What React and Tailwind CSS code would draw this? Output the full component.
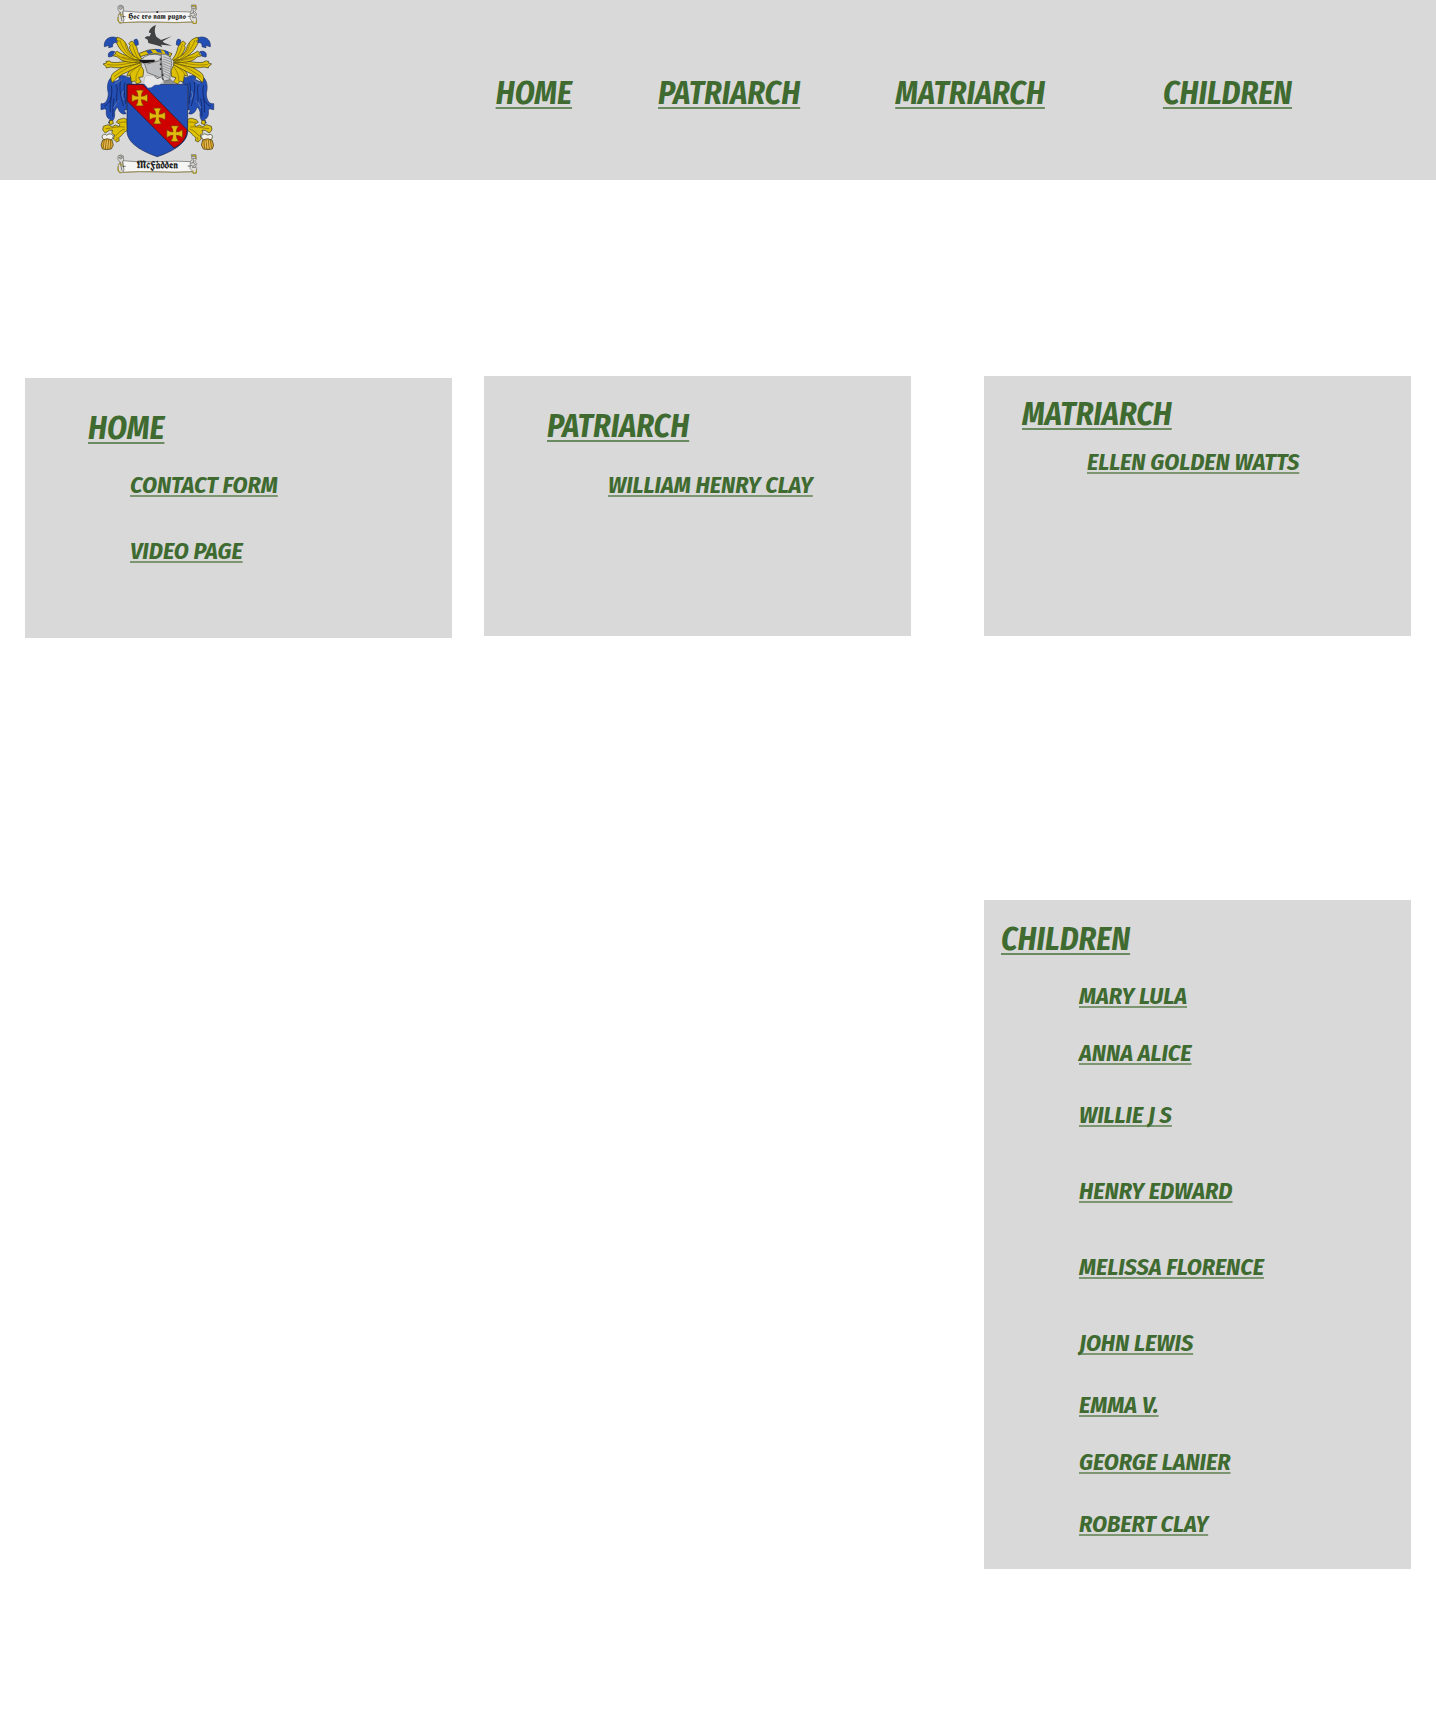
const LINK = "text-[#3f6b31] underline [text-decoration-skip-ink:none] decoration-2 whitespace-nowrap";
const LARGE = "decoration-[#6a8b5f] underline-offset-3";
const SMALL = "decoration-[#7b9671] underline-offset-2";

function Heading({ href, className = "", children }) {
  return (
    <h2 className={`leading-[38px] text-[32px] ${className}`}>
      <a href={href} className={`${LINK} ${LARGE}`}>{children}</a>
    </h2>
  );
}

function SubLink({ href, className = "", children }) {
  return (
    <li className={`leading-[30px] text-[24px] ${className}`}>
      <a href={href} className={`${LINK} ${SMALL}`}>{children}</a>
    </li>
  );
}

function Cross({ x, y }) {
  return (
    <path
      transform={`translate(${x} ${y})`}
      d="M-5-5Q-5-15-12-23Q0-25 12-23Q5-15 5-5Q15-5 23-12Q25 0 23 12Q15 5 5 5Q5 15 12 23Q0 25-12 23Q-5 15-5 5Q-15 5-23 12Q-25 0-23-12Q-15-5-5-5Z"
      fill="#e0b90c"
      stroke="#7b3205"
      strokeWidth="2"
    />
  );
}

function Mantling() {
  return (
    <g stroke="#3a3818" strokeWidth="2" strokeLinejoin="round">
      <g fill="#234eb3" stroke="#1b2f6c">
        <path d="M69 228C52 240 50 258 55 280C55 300 46 314 33 311V329L45 326L49 331C47 348 53 357 61 358L55 369C67 367 74 357 74 344C72 334 77 326 83 321C87 337 97 345 108 341L102 331L110 329V256L126 250L123 231C116 235 111 233 106 228L86 226L88 237C82 244 76 242 69 247Z" />
        <path d="M80 113C58 106 41 119 43 140L57 136L56 143L68 140C66 132 72 126 80 128Z" />
        <path d="M74 155C61 151 52 158 56 171L67 169L70 163Z" />
        <path d="M132 120L140 117L144 123L145 134L137 137L133 132Z" />
      </g>
      <path d="M77 253C88 266 75 287 82 310M63 256C71 277 57 305 61 337M93 239C86 262 92 288 100 318M105 247C99 266 106 292 107 311M42 319C53 313 61 305 64 291M68 350C70 333 67 315 72 295" fill="none" stroke="#142b70" strokeWidth="3" />
      <path d="M101 273C94 281 95 291 103 300M75 251C82 246 90 245 96 238M86 302C77 310 76 318 70 324" fill="none" stroke="#7890bd" strokeWidth="2" />
      <g fill="#dec004">
        <path d="M150 190C132 197 115 211 110 229L121 226L124 246L134 243L141 252L154 246L146 233L159 230L161 211Z" />
        <path d="M151 185C122 187 88 205 70 219C61 228 61 239 67 248C75 236 88 229 99 222C119 213 138 203 155 193Z" />
        <path d="M151 179C115 181 89 190 65 187L58 183L48 184L49 189L39 192L48 199L49 204L62 201C76 204 93 205 111 199C126 196 139 191 152 189Z" />
        <path d="M151 179C125 168 104 170 82 154L75 157L77 162L68 167L83 171C95 187 125 188 150 188Z" />
        <path d="M157 178C142 160 143 149 139 139C133 135 132 123 123 124L116 131L121 136L118 143C124 160 134 174 150 187Z" />
        <path d="M154 181C127 168 117 156 114 145C110 129 98 114 81 112L79 120L85 123L80 129C89 150 106 168 130 178Z" />
      </g>
      <path d="M145 184C118 170 100 151 89 120M149 181C132 160 132 145 126 132M145 183C112 181 92 173 79 164M144 184C113 191 80 199 51 193M147 190C111 201 91 217 72 230M151 195C129 208 120 219 118 229M152 201C143 216 135 228 139 243M105 127C107 148 115 159 132 170M95 171C112 174 128 179 142 181" fill="none" stroke="#806c04" strokeWidth="2" />
      <path d="M111 359C100 351 96 357 85 359L79 367L90 373L87 380L76 375L67 380L54 374L40 379L38 390L46 399L58 391L68 391C64 396 66 403 74 405L70 417L80 426L88 422L86 413C97 408 98 397 113 391ZM58 362L68 361L70 371L59 374Z" fill="#dec004" />
      <path d="M108 366C98 364 95 371 85 365M104 381C84 378 71 384 47 386M105 387C90 391 88 398 76 408M81 412L80 421" fill="none" stroke="#776208" />
      <path d="M40 418C30 406 44 399 50 406C58 399 68 401 70 410L64 421Z" fill="#f3f2ec" />
      <path d="M38 420Q51 412 66 420L70 435L64 447L50 449L37 447L33 435Z" fill="#d8a62a" />
      <path d="M43 419L40 444M49 418L46 448M56 418L53 448M62 420L60 446" fill="none" stroke="#754b10" />
      <path d="M46 422L43 443M53 421L50 445M59 423L57 443" fill="none" stroke="#f0ce70" />
    </g>
  );
}

function Banner({ children, y, size }) {
  return (
    <g transform={`translate(0 ${y})`} stroke="#66655f" strokeWidth="2">
      <path d="M99 17Q145 23 202 20Q259 17 307 20V50Q255 53 202 50Q145 49 99 52Z" fill="#f5f5f4" />
      <path d="M98 52Q145 48 202 51Q258 54 306 50" fill="none" stroke="#9c8b3c" />
      <path d="M84 3Q92-4 100 3L101 15L97 20L102 44Q101 55 89 54L84 46L85 28L91 22L84 14Z" fill="#dddcd8" />
      <path d="M304-1H318L319 13L314 18L320 26L317 34L320 41L319 54L309 55L306 47L300 41L301 20L306 14Z" fill="#dddcd8" />
      <path d="M88 3Q98 0 97 9Q88 16 88 6M91 7H94M306 4H317M307 10H318M302 25Q310 19 316 28Q309 38 303 30M306 37H317M90 20L96 47M310 13V23" fill="none" stroke="#4d4d4d" />
      <path d="M86 27H96V34M85 44Q84 53 95 53M305 1H317V10M309 47V54H319V45M84 35V46" fill="none" stroke="#aa951b" strokeWidth="3" />
      <path d="M97 34H107M293 33H302" stroke="#333" />
      <circle cx="202" cy="20" r="3" fill="#222" stroke="none" />
      <text x="202" y="42" textAnchor="middle" fill="#222" stroke="none" className={`not-italic font-['UnifrakturCook','Liberation_Serif',serif] font-bold ${size}`}>
        {children}
      </text>
    </g>
  );
}

function Crest() {
  return (
    <svg viewBox="0 0 420 540" className="h-[180px] w-[140px] shrink-0" role="img" aria-label="McFadden coat of arms">
      <Banner y={16} size="text-[24px]">Hoc ero nam pugno</Banner>
      <path d="M198 75C184 80 176 91 177 98L183 99L179 109C171 108 167 109 164 114L173 119L175 129L185 132C195 134 204 136 217 142L213 134L246 137L222 128L218 124L245 109L213 120L199 110C194 99 192 88 198 75Z" fill="#414244" />
      <Mantling />
      <g transform="matrix(-1 0 0 1 404 0)"><Mantling /></g>
      <path d="M111 253H293V393C293 430 246 455 202 470C158 455 111 430 111 393Z" fill="#244fb5" />
      <path d="M111 253H158L291 389C291 413 277 431 252 444L111 302Z" fill="#cf0000" stroke="#251523" strokeWidth="2" />
      <path d="M111 253H293V393C293 430 246 455 202 470C158 455 111 430 111 393Z" fill="none" stroke="#192450" strokeWidth="2" />
      <Cross x={149} y={294} />
      <Cross x={202} y={348} />
      <Cross x={254} y={401} />
      <path d="M148 160Q198 135 246 161L240 171Q198 151 151 170Z" fill="#dec004" stroke="#34301b" strokeWidth="2" />
      <path d="M168 153L181 149L189 158L175 162ZM194 147L210 148L217 159L202 157ZM221 150L234 154L239 167L227 162Z" fill="#244fb5" />
      <path d="M223 233L242 237L260 252H220Z" fill="#8d8e8f" />
      <path d="M148 182Q178 154 214 166L218 176V243L204 230L172 218L164 192Z" fill="#bcbdbe" stroke="#4b4b4b" strokeWidth="2" />
      <path d="M214 162Q245 161 245 190L239 239L219 244Z" fill="#cfd0d1" stroke="#555" strokeWidth="2" />
      <path d="M164 172Q185 160 211 169L205 181L160 179Z" fill="#d9d9d9" />
      <path d="M220 170L241 178M219 177L244 186M219 184L244 193M219 191L243 201M219 198L242 208M219 205L242 215M219 212L241 222M219 219L240 229M219 226L239 236" stroke="#777" strokeWidth="2" />
      <path d="M147 180L194 179V185L167 190Q151 189 147 180Z" fill="#171717" />
      <path d="M172 192L209 182M212 173L216 240" fill="none" stroke="#555" strokeWidth="2" />
      <g fill="#333">
        <circle cx="212" cy="178" r="3" /><circle cx="212" cy="193" r="3" /><circle cx="212" cy="207" r="3" /><circle cx="218" cy="225" r="3" /><circle cx="218" cy="238" r="3" />
      </g>
      <path d="M164 232L170 226L194 228L201 236L213 231L221 245L208 254L194 255L185 262L174 264L161 250Z" fill="#e6e6e6" stroke="#888" strokeWidth="1" />
      <path d="M194 228L201 236L213 231" fill="none" stroke="#444" strokeWidth="2" />
      <Banner y={465} size="text-[32px]">McFadden</Banner>
    </svg>
  );
}

const CHILDREN = [
  { name: "MARY LULA", gap: "" },
  { name: "ANNA ALICE", gap: "mt-[27px]" },
  { name: "WILLIE J S", gap: "mt-8" },
  { name: "HENRY EDWARD", gap: "mt-[46px]" },
  { name: "MELISSA FLORENCE", gap: "mt-[46px]" },
  { name: "JOHN LEWIS", gap: "mt-[46px]" },
  { name: "EMMA V.", gap: "mt-8" },
  { name: "GEORGE LANIER", gap: "mt-[27px]" },
  { name: "ROBERT CLAY", gap: "mt-8" },
];

const NAV = [
  { label: "HOME", href: "#home", gap: "" },
  { label: "PATRIARCH", href: "#patriarch", gap: "ml-[86px]" },
  { label: "MATRIARCH", href: "#matriarch", gap: "ml-[95px]" },
  { label: "CHILDREN", href: "#children", gap: "ml-[118px]" },
];

export default function App() {
  return (
    <div className="min-h-screen bg-white font-['Fira_Sans_Condensed','Roboto_Condensed',sans-serif] font-bold italic">
      <header className="flex h-[180px] bg-[#d9d9d9] pl-[90px] pr-36">
        <Crest />
        <nav className="ml-auto flex pt-[74px] text-[32px] leading-[38px]">
          {NAV.map((item) => (
            <div key={item.label} className={item.gap}>
              <a href={item.href} className={`${LINK} ${LARGE}`}>{item.label}</a>
            </div>
          ))}
        </nav>
      </header>

      <main className="grid grid-cols-[459fr_500fr_427fr] gap-y-66 px-[25px] pt-49 pb-36">
        <section id="home" className="mt-0.5 -mb-0.5 mr-8 min-h-65 bg-[#d9d9d9] pt-[31px]">
          <Heading href="#home" className="pl-[63px]">HOME</Heading>
          <ul className="mt-[23px] flex flex-col gap-9 pl-[105px]">
            <SubLink href="#contact">CONTACT FORM</SubLink>
            <SubLink href="#video">VIDEO PAGE</SubLink>
          </ul>
        </section>

        <section id="patriarch" className="mr-[73px] min-h-65 bg-[#d9d9d9] pt-[31px]">
          <Heading href="#patriarch" className="pl-[63px]">PATRIARCH</Heading>
          <ul className="mt-[25px] pl-31">
            <SubLink href="#william">WILLIAM HENRY CLAY</SubLink>
          </ul>
        </section>

        <section id="matriarch" className="min-h-65 bg-[#d9d9d9] pt-[19px]">
          <Heading href="#matriarch" className="pl-[38px]">MATRIARCH</Heading>
          <ul className="mt-[14px] pl-[103px]">
            <SubLink href="#ellen">ELLEN GOLDEN WATTS</SubLink>
          </ul>
        </section>

        <section id="children" className="col-start-3 bg-[#d9d9d9] pt-5 pb-[30px]">
          <Heading href="#children" className="pl-[17px]">CHILDREN</Heading>
          <ul className="mt-[23px] pl-[95px]">
            {CHILDREN.map((child) => (
              <SubLink key={child.name} href="#children" className={child.gap}>{child.name}</SubLink>
            ))}
          </ul>
        </section>
      </main>
    </div>
  );
}
